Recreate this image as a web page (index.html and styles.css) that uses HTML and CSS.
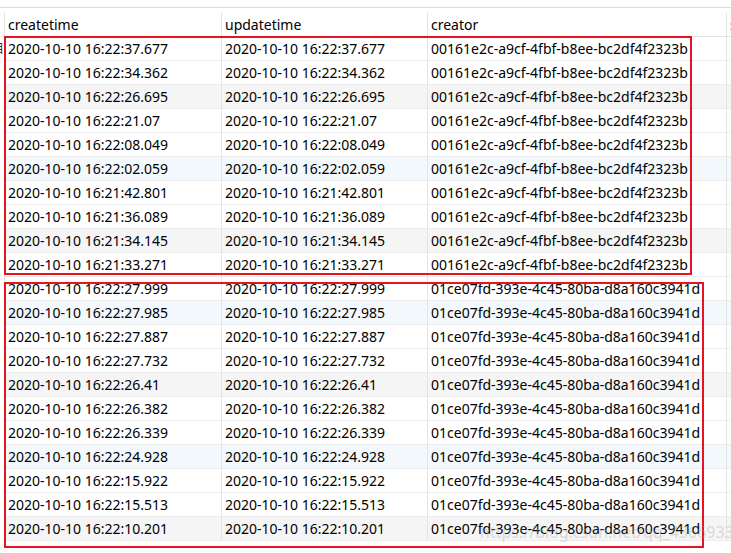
FILE: index.html
```html
<!DOCTYPE html>
<html lang="en">
<head>
  <meta charset="UTF-8">
  <title>Query result</title>
  <link rel="stylesheet" href="styles.css">
</head>
<body>
  <div class="grid-wrap">
    <div class="toolbar-line"></div>
    <span class="row-icon">目</span>
    <table class="result">
      <colgroup>
        <col class="c1"><col class="c2"><col class="c3"><col class="c4">
      </colgroup>
      <tr class="head">
        <th>createtime</th>
        <th>updatetime</th>
        <th>creator</th>
        <th>s</th>
      </tr>
      <tr><td>2020-10-10 16:22:37.677</td><td>2020-10-10 16:22:37.677</td><td>00161e2c-a9cf-4fbf-b8ee-bc2df4f2323b</td><td></td></tr>
      <tr><td>2020-10-10 16:22:34.362</td><td>2020-10-10 16:22:34.362</td><td>00161e2c-a9cf-4fbf-b8ee-bc2df4f2323b</td><td></td></tr>
      <tr class="shade"><td>2020-10-10 16:22:26.695</td><td>2020-10-10 16:22:26.695</td><td>00161e2c-a9cf-4fbf-b8ee-bc2df4f2323b</td><td></td></tr>
      <tr><td>2020-10-10 16:22:21.07</td><td>2020-10-10 16:22:21.07</td><td>00161e2c-a9cf-4fbf-b8ee-bc2df4f2323b</td><td></td></tr>
      <tr><td>2020-10-10 16:22:08.049</td><td>2020-10-10 16:22:08.049</td><td>00161e2c-a9cf-4fbf-b8ee-bc2df4f2323b</td><td></td></tr>
      <tr class="shade-blue"><td>2020-10-10 16:22:02.059</td><td>2020-10-10 16:22:02.059</td><td>00161e2c-a9cf-4fbf-b8ee-bc2df4f2323b</td><td></td></tr>
      <tr><td>2020-10-10 16:21:42.801</td><td>2020-10-10 16:21:42.801</td><td>00161e2c-a9cf-4fbf-b8ee-bc2df4f2323b</td><td></td></tr>
      <tr><td>2020-10-10 16:21:36.089</td><td>2020-10-10 16:21:36.089</td><td>00161e2c-a9cf-4fbf-b8ee-bc2df4f2323b</td><td></td></tr>
      <tr class="shade"><td>2020-10-10 16:21:34.145</td><td>2020-10-10 16:21:34.145</td><td>00161e2c-a9cf-4fbf-b8ee-bc2df4f2323b</td><td></td></tr>
      <tr><td>2020-10-10 16:21:33.271</td><td>2020-10-10 16:21:33.271</td><td>00161e2c-a9cf-4fbf-b8ee-bc2df4f2323b</td><td></td></tr>
      <tr><td>2020-10-10 16:22:27.999</td><td>2020-10-10 16:22:27.999</td><td>01ce07fd-393e-4c45-80ba-d8a160c3941d</td><td></td></tr>
      <tr class="shade-blue"><td>2020-10-10 16:22:27.985</td><td>2020-10-10 16:22:27.985</td><td>01ce07fd-393e-4c45-80ba-d8a160c3941d</td><td></td></tr>
      <tr><td>2020-10-10 16:22:27.887</td><td>2020-10-10 16:22:27.887</td><td>01ce07fd-393e-4c45-80ba-d8a160c3941d</td><td></td></tr>
      <tr><td>2020-10-10 16:22:27.732</td><td>2020-10-10 16:22:27.732</td><td>01ce07fd-393e-4c45-80ba-d8a160c3941d</td><td></td></tr>
      <tr class="shade"><td>2020-10-10 16:22:26.41</td><td>2020-10-10 16:22:26.41</td><td>01ce07fd-393e-4c45-80ba-d8a160c3941d</td><td></td></tr>
      <tr><td>2020-10-10 16:22:26.382</td><td>2020-10-10 16:22:26.382</td><td>01ce07fd-393e-4c45-80ba-d8a160c3941d</td><td></td></tr>
      <tr><td>2020-10-10 16:22:26.339</td><td>2020-10-10 16:22:26.339</td><td>01ce07fd-393e-4c45-80ba-d8a160c3941d</td><td></td></tr>
      <tr class="shade-blue"><td>2020-10-10 16:22:24.928</td><td>2020-10-10 16:22:24.928</td><td>01ce07fd-393e-4c45-80ba-d8a160c3941d</td><td></td></tr>
      <tr><td>2020-10-10 16:22:15.922</td><td>2020-10-10 16:22:15.922</td><td>01ce07fd-393e-4c45-80ba-d8a160c3941d</td><td></td></tr>
      <tr><td>2020-10-10 16:22:15.513</td><td>2020-10-10 16:22:15.513</td><td>01ce07fd-393e-4c45-80ba-d8a160c3941d</td><td></td></tr>
      <tr class="shade"><td>2020-10-10 16:22:10.201</td><td>2020-10-10 16:22:10.201</td><td>01ce07fd-393e-4c45-80ba-d8a160c3941d</td><td></td></tr>
    </table>

    <!-- annotation boxes drawn over the grid -->
    <div class="mark mark-first"></div>
    <div class="mark mark-second"></div>
    <div class="watermark">https://blog.csdn.net/qq_43669333</div>
  </div>
</body>
</html>
```

FILE: styles.css
```css
html, body {
  margin: 0;
  background-color: white;
}

body {
  font-family: "Noto Sans", "Noto Sans CJK SC", sans-serif;
  font-size: 14px;
  color: #000;
  width: 731px;
  height: 553px;
  overflow: hidden;
}

.grid-wrap {
  position: relative;
  width: 731px;
  height: 553px;
  overflow: hidden;
}

.toolbar-line {
  height: 7px;
  border-bottom: 1px solid #dcdcdc;
  margin-bottom: 5px;
}

.row-icon {
  position: absolute;
  left: -8px;
  top: 39px;
  font-size: 12px;
  color: #333;
}

table.result {
  border-collapse: collapse;
  table-layout: fixed;
  width: 800px;
  margin-left: 4px;
}

col.c1 { width: 217px; }
col.c2 { width: 206px; }
col.c3 { width: 299px; }
col.c4 { width: 78px; }

th, td {
  height: 23px;
  padding: 0 0 0 3px;
  border-left: 1px solid #e4e4e4;
  border-bottom: 1px solid #ececec;
  text-align: left;
  font-weight: normal;
  white-space: nowrap;
  overflow: hidden;
  line-height: 23px;
}

tr.head th {
  border-bottom: 1px solid #e4e4e4;
}

tr.shade td {
  background-color: #f5f5f5;
}

tr.shade-blue td {
  background-color: #f3f8fd;
}

.mark {
  position: absolute;
  border: 2px solid #e5141f;
  box-sizing: border-box;
}

.mark-first {
  left: 4px;
  top: 36px;
  width: 688px;
  height: 239px;
}

.mark-second {
  left: 4px;
  top: 282px;
  width: 700px;
  height: 266px;
}

.watermark {
  position: absolute;
  left: 480px;
  top: 521px;
  font-size: 16px;
  color: rgba(160, 160, 160, 0.35);
  white-space: nowrap;
}
```
